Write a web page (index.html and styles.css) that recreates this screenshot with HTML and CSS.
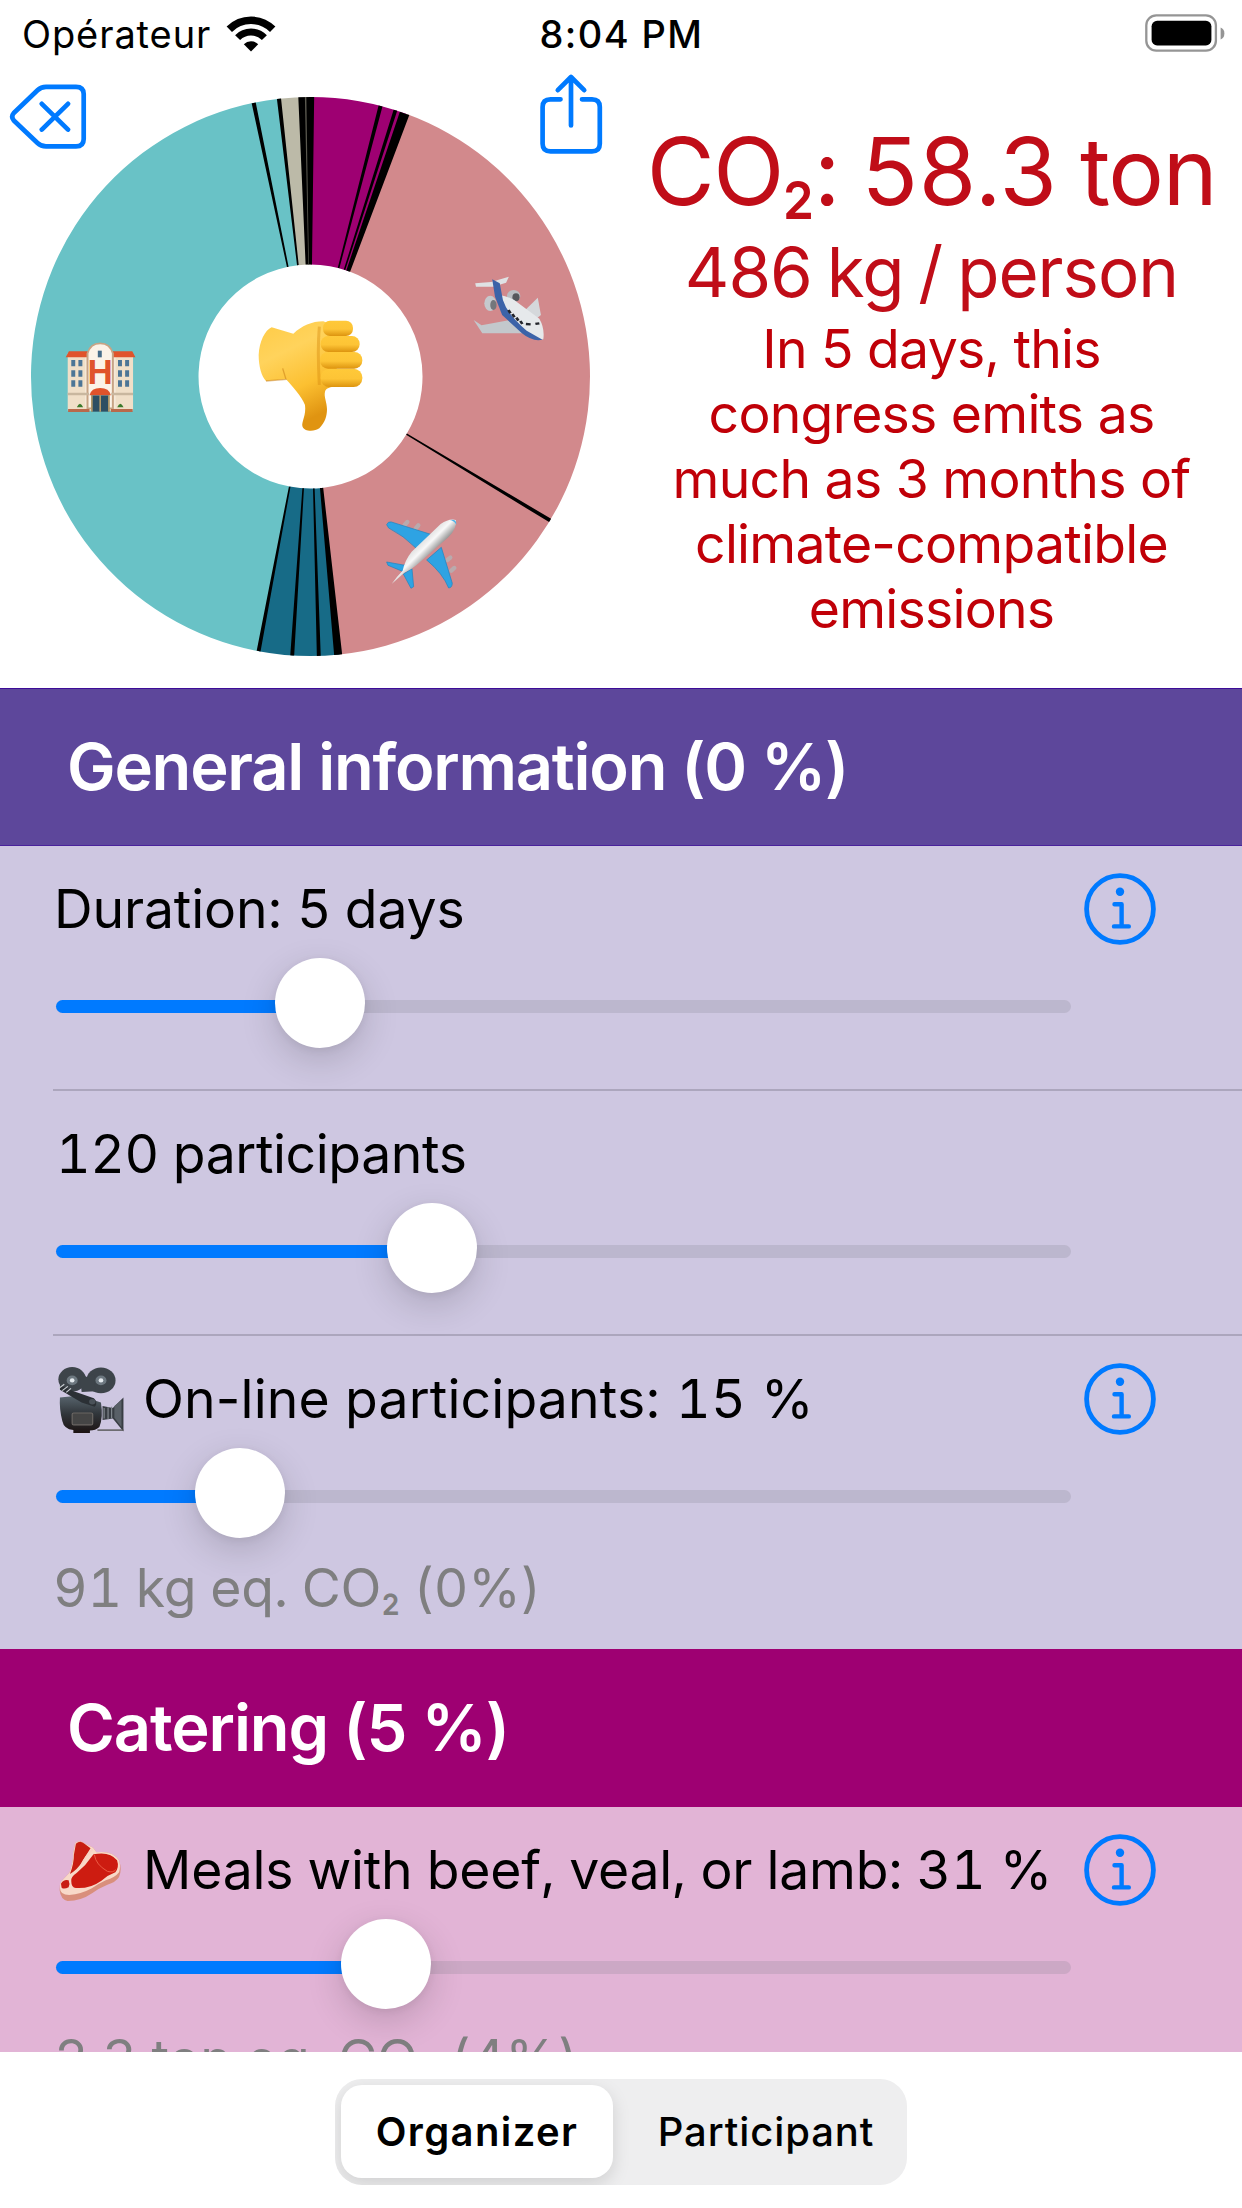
FILE: index.html
```html
<!DOCTYPE html>
<html lang="en">
<head>
<meta charset="utf-8">
<title>Congress footprint</title>
<link rel="stylesheet" href="styles.css">
</head>
<body>
<svg class="defs" width="0" height="0" aria-hidden="true">
  <defs>
    <symbol id="info" viewBox="-36 -36 72 72">
      <g fill="none" stroke="#007aff" stroke-linecap="round" stroke-linejoin="round">
        <circle r="33.4" stroke-width="4.8"/>
        <path d="M-5.5-4.8H1.6V17.4M-6 17.4H8.8" stroke-width="4.4"/>
      </g>
      <circle cx="0" cy="-17.2" r="4.2" fill="#007aff"/>
    </symbol>
  </defs>
</svg>

<div class="app">
  <header class="status">
    <div class="carrier">
      <span class="carrier-name">Opérateur</span>
      <svg class="wifi" viewBox="226 14 50 38">
        <g fill="none" stroke="#000">
          <path d="M229.3 28.3A30.7 30.7 0 0 1 272.7 28.3" stroke-width="7.6"/>
          <path d="M237.6 36.6A18.9 18.9 0 0 1 264.4 36.6" stroke-width="7"/>
        </g>
        <path d="M251 50.6L243.8 43.2A10.2 10.2 0 0 1 258.2 43.2Z"/>
      </svg>
    </div>
    <span class="clock">8:04 PM</span>
    <svg class="battery" viewBox="0 0 80 38">
      <rect x="1.3" y="1.3" width="69.6" height="35.4" rx="10" fill="none" stroke="#959595" stroke-width="2.3"/>
      <rect x="6.6" y="6.8" width="59.8" height="24.6" rx="5.5"/>
      <path d="M75.6 13.6Q79.4 15 79.4 19.4T75.6 25.4Z" fill="#959595"/>
    </svg>
  </header>

  <main class="summary">
    <div class="chart">
      <svg class="donut" viewBox="0 68 621 620">
        <defs>
          <linearGradient id="skin" x1="0" y1="0" x2=".35" y2="1">
            <stop offset="0" stop-color="#ffcb45"/><stop offset=".35" stop-color="#ffd35c"/><stop offset=".7" stop-color="#fcc031"/><stop offset="1" stop-color="#e09411"/>
          </linearGradient>
          <linearGradient id="finger" x1="0" y1="0" x2="0" y2="1">
            <stop offset="0" stop-color="#ffc939"/><stop offset=".55" stop-color="#fdc436"/><stop offset="1" stop-color="#dd940f"/>
          </linearGradient>
          <linearGradient id="hull" gradientUnits="userSpaceOnUse" x1="570" y1="730" x2="605" y2="765">
            <stop offset="0" stop-color="#e2e2e2"/><stop offset=".4" stop-color="#f8f8f8"/><stop offset="1" stop-color="#8f8f8f"/>
          </linearGradient>
        </defs>
        <g class="slices"></g>
        <g class="gaps"></g>

        <g transform="translate(230 300) scale(.3333)">
          <path fill="url(#skin)" d="M125 82L190 101C215 78 245 64 280 64L320 80V240L310 260C298 262 288 264 285 275C281 292 291 305 291 328C291 348 285 368 268 385C253 396 222 396 217 378C215 365 229 345 225 315C215 290 190 262 168 238L108 243C95 230 86 200 86 165C88 125 105 90 125 82Z"/>
          <path d="M268 80Q262 150 268 255" fill="none" stroke="#d98f12" stroke-width="9" opacity=".45"/>
          <g fill="url(#finger)">
            <rect x="272" y="206" width="125" height="55" rx="26"/>
            <rect x="270" y="156" width="127" height="50" rx="24"/>
            <rect x="272" y="108" width="117" height="48" rx="23"/>
            <rect x="279" y="62" width="90" height="46" rx="21"/>
          </g>
          <path d="M108 243L168 238L158 205" fill="none" stroke="#c67a12" stroke-width="4" opacity=".5"/>
        </g>

        <g transform="scale(.396 .3333)">
          <ellipse cx="1297" cy="888" rx="17" ry="18" fill="#b9bdc2"/><ellipse cx="1303" cy="892" rx="9" ry="12" fill="#55575c"/>
          <path fill="#d5d8db" d="M1358 893L1366 945L1348 962L1322 935Z"/>
          <path fill="#dfe2e4" d="M1200 850L1240 846L1285 830L1278 848L1245 860L1202 860Z"/>
          <path fill="#c3c8cc" d="M1196 960L1216 976L1290 960L1338 1000L1218 1000Z"/>
          <path fill="#e6e9eb" d="M1262 885Q1290 890 1312 912L1362 956Q1376 985 1372 1018Q1350 1022 1325 998L1262 925Z"/>
          <path fill="#3c63a8" d="M1243 838L1262 850L1270 900Q1282 945 1330 992L1370 1019Q1345 1026 1318 1000L1268 945L1250 890Z"/>
          <ellipse cx="1238" cy="910" rx="15" ry="23" fill="#c5c9cd"/><ellipse cx="1246" cy="915" rx="8" ry="15" fill="#74777c"/>
          <path d="M1284 930l5 10M1294 942l5 10M1304 953l5 9M1314 963l5 9M1328 972l12 1M1352 972l10-2" stroke="#24262c" stroke-width="7"/>
        </g>

        <g transform="translate(230 300) scale(.3333)">
          <g stroke="#b9aaad" stroke-width="13" stroke-linecap="round">
            <path d="M524 675L532 666M557 686L565 676M652 780L661 773M664 812L673 804"/>
          </g>
          <g fill="#2ea3e3" stroke="#1b83bf" stroke-width="2">
            <path d="M470 674Q474 664 484 666L602 703L560 746Q520 706 476 684Z"/>
            <path d="M634 742L667 850Q666 864 656 864Q638 820 590 780Z"/>
            <path d="M470 786L520 795L542 790L522 816L474 796Z"/>
            <path d="M546 806L551 860L543 865L520 822Z"/>
          </g>
          <path fill="url(#hull)" d="M678 660Q682 685 655 712L560 795Q545 808 523 818L485 852Q500 830 518 812Q525 780 545 755L632 672Q658 654 678 660Z"/>
          <path fill="#4db2e8" d="M660 660Q680 656 679 674Q672 662 660 660Z"/>
        </g>

        <g transform="translate(0 340) scale(.396 .3333)">
          <rect x="171" y="40" width="165" height="172" fill="#f0dfc8"/>
          <path d="M215 40H292V205H215Z" fill="#f6e9d9"/>
          <path d="M166 52L174 34H222V52ZM285 34H334L342 52H285Z" fill="#e0532b"/>
          <path d="M221 205V40Q228 10 253 10T285 40V205Z" fill="#fbf3e8" stroke="#c7a384" stroke-width="5"/>
          <rect x="247" y="32" width="10" height="20" fill="#456b88"/>
          <path fill="#4c7596" d="M180 60h10v19h-10zM198 60h10v19h-10zM298 60h10v19h-10zM316 60h10v19h-10zM180 91h10v19h-10zM198 91h10v19h-10zM298 91h10v19h-10zM316 91h10v19h-10zM180 121h10v19h-10zM198 121h10v19h-10zM298 121h10v19h-10zM316 121h10v19h-10z"/>
          <path d="M171 158H225V166H171ZM281 158H336V166H281Z" fill="#c9b79f"/>
          <path d="M172 207H226V216H172ZM280 207H335V216H280Z" fill="#b9694b"/>
          <path d="M226 166Q230 144 253 144T280 166Z" fill="#e0532b"/>
          <rect x="230" y="166" width="46" height="49" fill="#2d4f63"/>
          <path d="M253 166V215M232 166V215M275 166V215" stroke="#b99d68" stroke-width="4"/>
          <path d="M194 202q8-22 16 0zM296 202q8-22 16 0z" fill="#3c7a2c"/>
        </g>
        <text class="hotel-letter" x="100.2" y="383.8">H</text>
      </svg>
      <svg class="reset" viewBox="8 82 80 70">
        <path d="M46 86.8H76Q83.7 86.8 83.7 94V139Q83.7 146.4 76 146.4H46Q41 146.4 37.5 143L13.8 120.5Q10.6 116.7 13.8 113L37.5 90.2Q41 86.8 46 86.8ZM41.8 103.8L68 129.6M68 103.8L41.8 129.6"/>
      </svg>
      <svg class="share" viewBox="536 72 70 86">
        <path d="M560.5 99.3H550.5Q542.6 99.3 542.6 107V143.8Q542.6 151.4 550.5 151.4H592Q599.8 151.4 599.8 143.8V107Q599.8 99.3 592 99.3H582M571 125.5V77.5M557.8 90.2L571 77L584.2 90.2" />
      </svg>
    </div>
    <div class="result">
      <p class="total">CO<span class="two">₂</span>: <span class="amount">58.3</span> ton</p>
      <p class="per-person">486 kg / person</p>
      <p class="comment">In 5 days, this<br>congress emits as<br>much as 3 months of<br>climate-compatible<br>emissions</p>
    </div>
  </main>

  <div class="list">
    <h2 class="section general-head">General information (0 %)</h2>
    <div class="rows general">
      <div class="row">
        <div class="label duration"><span>Duration: 5 days</span></div>
        <svg class="info"><use href="#info"/></svg>
        <div class="slider"><div class="fill" style="width:263px"></div><div class="thumb" style="left:218.5px"></div></div>
      </div>
      <div class="row">
        <div class="label count"><span>120 participants</span></div>
        <div class="slider"><div class="fill" style="width:375px"></div><div class="thumb" style="left:331px"></div></div>
      </div>
      <div class="row last">
        <div class="label online">
          <span class="emoji"><svg width="71" height="70" viewBox="140 755 180 200" preserveAspectRatio="none">
            <defs><linearGradient id="cam" x1="0" y1="0" x2="0" y2="1"><stop offset="0" stop-color="#59666f"/><stop offset=".5" stop-color="#30353a"/><stop offset="1" stop-color="#1c1312"/></linearGradient></defs>
            <path d="M258 872L284 878L311 848V945L284 908L258 912Z" fill="#383d43"/>
            <path d="M288 872L306 856V932L288 906Z" fill="#596067"/>
            <path d="M262 878V908M272 876V910M281 874V908" stroke="#81888e" stroke-width="3"/>
            <path d="M245 941H311" stroke="#555" stroke-width="4"/>
            <path d="M150 848L200 842L254 862Q260 905 250 932Q240 942 226 942V949H184V941Q160 938 156 915Q148 880 150 848Z" fill="url(#cam)"/>
            <circle cx="181" cy="796" r="35" fill="#3d444a"/><circle cx="254" cy="799" r="37" fill="#3d444a"/>
            <path d="M200 780L220 790L236 780L240 830L205 832Z" fill="#3d444a"/>
            <path d="M150 812L185 830L236 850Q248 862 238 874L205 862L150 826Z" fill="#2b3035"/>
            <path d="M147 822l14-12M156 828l14-12M166 833l12-11" stroke="#c9ced2" stroke-width="3"/>
            <circle cx="181" cy="799" r="14" fill="#6d7880"/><circle cx="254" cy="799" r="14" fill="#6d7880"/>
            <circle cx="181" cy="799" r="6" fill="#e4eaee"/><circle cx="254" cy="799" r="6" fill="#e4eaee"/>
            <circle cx="232" cy="860" r="8" fill="#4a5259"/>
            <rect x="181" y="892" width="52" height="34" rx="4" fill="#454545" stroke="#6b6663" stroke-width="3"/>
          </svg></span><span>On-line participants: <span class="digits">15</span> %</span>
        </div>
        <svg class="info"><use href="#info"/></svg>
        <div class="slider"><div class="fill" style="width:183px"></div><div class="thumb" style="left:139px"></div></div>
        <div class="footprint">91 kg eq. CO<span class="two">₂</span> (0%)</div>
      </div>
    </div>
    <h2 class="section catering-head">Catering (5 %)</h2>
    <div class="rows catering">
      <div class="row last">
        <div class="label meals">
          <span class="emoji"><svg width="68" height="65" viewBox="50 55 205 195" preserveAspectRatio="none">
            <path d="M108 70Q122 58 138 72L162 84L172 98Q220 92 240 122Q250 150 240 172Q230 188 205 195Q180 205 160 220Q125 244 85 244Q64 240 61 212Q60 195 66 185L90 160Q102 130 102 100Z" fill="#d98f7c"/>
            <path d="M108 70Q122 58 138 72L162 84L172 98Q220 92 240 122Q246 140 240 158Q228 174 200 182Q178 192 158 206Q125 224 90 226Q62 226 62 205Q61 192 66 185L90 160Q102 130 102 100Z" fill="#f8d9c8"/>
            <path d="M110 72Q124 60 138 74L154 86Q142 105 130 125Q115 150 92 163Q104 132 104 105Z" fill="#c81d12"/>
            <path d="M163 104Q212 94 234 122Q241 142 229 158Q207 166 187 183Q152 208 110 205Q96 204 96 184Q94 172 112 160L138 136Z" fill="#cd1c11"/>
            <path d="M65 192Q73 178 88 182Q93 192 88 203Q74 210 67 204Z" fill="#c81d12"/>
            <path d="M166 106Q170 135 205 155Q222 160 230 150" fill="none" stroke="#eb5b45" stroke-width="3"/>
            <path d="M160 90Q140 108 126 136" fill="none" stroke="#f7d3c3" stroke-width="5"/>
          </svg></span><span>Meals with beef, veal, or lamb: 31 %</span>
        </div>
        <svg class="info"><use href="#info"/></svg>
        <div class="slider"><div class="fill" style="width:329px"></div><div class="thumb" style="left:285px"></div></div>
        <div class="footprint meal-footprint">2.3 ton eq. CO<span class="two">₂</span> (4%)</div>
      </div>
    </div>
  </div>

  <nav class="tabbar">
    <div class="segmented">
      <div class="segment selected">Organizer</div>
      <div class="segment">Participant</div>
    </div>
  </nav>
</div>
<script src="chart.js"></script>
</body>
</html>
```
FILE: chart.js
```js
// Slices and separators of the donut, in degrees clockwise from the top.
const NS = 'http://www.w3.org/2000/svg';
const CX = 310.5, CY = 376.5, OUTER = 279.5, INNER = 112;

const slices = [
  [0, 20, '#9e0072'],
  [20, 174, '#d2898c'],
  [174, 190.7, '#176b87'],
  [190.7, 353.6, '#69c2c6'],
  [353.6, 360, '#bcbaa8']
];
const gaps = [
  [-12.15, -11.3], [-6.9, -6.05], [-2.5, 0.75], [14.1, 14.92], [17.3, 18.07],
  [18.65, 20.7], [120.6, 121.4], [173.5, 175.15], [177.9, 178.7],
  [183.35, 184.15], [190.3, 191.1]
];

function point(angle, radius) {
  const a = angle * Math.PI / 180;
  return (CX + radius * Math.sin(a)).toFixed(2) + ' ' + (CY - radius * Math.cos(a)).toFixed(2);
}

function wedge(from, to, fill, parent) {
  const path = document.createElementNS(NS, 'path');
  const large = to - from > 180 ? 1 : 0;
  path.setAttribute('d', `M${point(from, OUTER)}A${OUTER} ${OUTER} 0 ${large} 1 ${point(to, OUTER)}` +
    `L${point(to, INNER)}A${INNER} ${INNER} 0 ${large} 0 ${point(from, INNER)}Z`);
  path.setAttribute('fill', fill);
  parent.appendChild(path);
}

const sliceGroup = document.querySelector('.slices');
slices.forEach(([from, to, fill]) => wedge(from, to, fill, sliceGroup));
const gapGroup = document.querySelector('.gaps');
gaps.forEach(([from, to]) => wedge(from, to, '#000', gapGroup));
wedge(-1.15, -0.85, '#5a594f', gapGroup);
```
FILE: styles.css
```css
* { box-sizing: border-box; margin: 0; padding: 0; }

body {
  background: #fff;
  color: #000;
  font-family: Inter, "Liberation Sans", sans-serif;
}

.defs { position: absolute; }

.app {
  width: 1242px;
  height: 2208px;
  display: flex;
  flex-direction: column;
  overflow: hidden;
}

/* status bar */
.status {
  height: 68px;
  display: grid;
  grid-template-columns: 1fr auto 1fr;
  align-items: center;
  padding: 0 17px 0 22px;
  font-size: 38px;
}
.carrier { display: flex; align-items: center; gap: 15px; }
.carrier-name { letter-spacing: 0.9px; }
.wifi { width: 50px; height: 38px; }
.clock { font-weight: 500; letter-spacing: 1.4px; margin-right: 4px; }
.battery { width: 80px; height: 38px; justify-self: end; margin-top: -3px; }

/* chart and totals */
.summary { height: 620px; display: grid; grid-template-columns: 621px 621px; }
.chart { position: relative; }
.donut { display: block; width: 621px; height: 620px; }
.hotel-letter {
  font: 700 35px "Liberation Sans", sans-serif;
  fill: #e0532b;
  text-anchor: middle;
}
.reset, .share {
  position: absolute;
  fill: none;
  stroke: #007aff;
  stroke-width: 4.7;
  stroke-linecap: round;
  stroke-linejoin: round;
}
.reset { left: 8px; top: 14px; width: 80px; height: 70px; }
.share { left: 536px; top: 4px; width: 70px; height: 86px; }

.result { padding-top: 47px; text-align: center; color: #c00d18; white-space: nowrap; }
.two { display: inline-block; margin: 0 -0.05em; transform: scaleX(0.8); }
.total { font-size: 93px; line-height: 113px; letter-spacing: -1.3px; word-spacing: -2.5px; }
.amount { letter-spacing: 0.6px; }
.per-person { font-size: 69px; line-height: 87px; letter-spacing: -1px; word-spacing: -3.5px; padding-top: 1px; }
.comment { font-size: 53.5px; line-height: 65px; letter-spacing: -0.75px; color: #c00008; }

/* settings list */
.list { height: 1364px; overflow: hidden; }
.section {
  display: flex;
  align-items: center;
  height: 158px;
  padding: 0 0 2px 67px;
  font-size: 65px;
  font-weight: 600;
  letter-spacing: -1.25px;
  color: #fff;
}
.general-head {
  background: #5d479b;
  border-top: 1px solid #3d0c98;
  border-bottom: 1px solid #4a229c;
}
.catering-head { background: #9e0072; letter-spacing: -1.1px; }
.general { background: #cec7e1; }
.catering { background: #e2b4d6; }

.row {
  position: relative;
  height: 245px;
  margin-left: 53px;
  padding-top: 30px;
  border-bottom: 2px solid #aca6bd;
  display: grid;
  grid-template-columns: 1031px 72px;
  grid-template-rows: 65px 90px 65px;
  row-gap: 17px;
}
.row.last { height: 313px; border-bottom: 0; }
.label {
  display: flex;
  align-items: center;
  font-size: 53.5px;
  line-height: 65px;
  letter-spacing: -0.15px;
  white-space: nowrap;
}
.duration { padding-left: 1px; }
.count, .digits, .meals, .footprint { font-variant-numeric: tabular-nums; }
.count { letter-spacing: -0.4px; padding-left: 3px; }
.online { letter-spacing: 0.15px; }
.meals { letter-spacing: -0.2px; }
.emoji { display: flex; width: 90px; height: 65px; align-items: center; padding: 2px 0 0 3px; }
.emoji svg { flex: none; }
.info { width: 72px; height: 72px; align-self: center; }

.slider { grid-column: 1; position: relative; width: 1015px; height: 90px; margin-left: 3px; padding-top: 42px; }
.slider::before {
  content: "";
  display: block;
  height: 13px;
  border-radius: 7px;
  background: rgba(120, 120, 128, 0.2);
}
.fill { height: 13px; margin-top: -13px; border-radius: 7px; background: #007aff; }
.thumb {
  position: absolute;
  top: 0;
  width: 90px;
  height: 90px;
  border-radius: 50%;
  background: #fff;
  box-shadow: 0 12px 36px rgba(0, 0, 0, 0.16), 0 2px 8px rgba(0, 0, 0, 0.06);
}
.footprint { grid-column: 1; font-size: 53.5px; line-height: 65px; letter-spacing: -0.3px; color: #7f7f80; }
.meal-footprint { padding-left: 1px; letter-spacing: -0.15px; }

/* bottom switch */
.tabbar { height: 156px; padding-top: 27px; display: flex; justify-content: center; background: #fff; }
.segmented {
  display: flex;
  gap: 12px;
  width: 572px;
  height: 106px;
  padding: 6px 0 7px 6px;
  border-radius: 27px;
  background: #eeeeef;
  overflow: hidden;
}
.segment {
  flex: 1;
  display: flex;
  align-items: center;
  justify-content: center;
  border-radius: 21px;
  font-size: 40px;
  font-weight: 500;
  letter-spacing: 0.9px;
}
.segment.selected {
  flex: 0 0 272px;
  background: #fff;
  font-weight: 600;
  letter-spacing: 1.4px;
  box-shadow: 0 6px 18px rgba(0, 0, 0, 0.13);
}
```
